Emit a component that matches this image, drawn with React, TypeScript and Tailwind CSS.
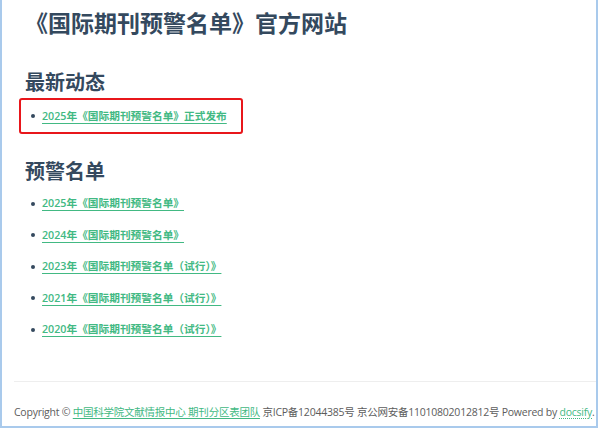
import React from "react";

const font = { fontFamily: '"Open Sans", "Noto Sans CJK SC", sans-serif' };

const warnings = [
  "2025年《国际期刊预警名单》",
  "2024年《国际期刊预警名单》",
  "2023年《国际期刊预警名单（试行）》",
  "2021年《国际期刊预警名单（试行）》",
  "2020年《国际期刊预警名单（试行）》",
];

function Dot() {
  return <span className="block w-[4px] h-[4px] rounded-full bg-[#34495e] shrink-0" />;
}

export default function App() {
  return (
    <div style={font} className="w-[598px] h-[428px] bg-white border-x-2 border-b-2 border-[#a9caec] flex flex-col text-[#34495e] overflow-hidden">
      <div className="pl-[17px]">
        <h1 className="pl-[6px] h-[46px] leading-[46px] text-[23px] font-bold">
          《国际期刊预警名单》官方网站
        </h1>
        <h2 className="pl-[6px] mt-[24px] h-[26px] leading-[26px] text-[20px] font-bold">最新动态</h2>
        <div className="mt-[2px] w-[224px] h-[36px] border-2 border-[#e8161b] rounded-[3px] flex items-center pl-[10px] gap-[7px]">
          <Dot />
          <a className="text-[10.7px] font-semibold text-[#42b983] underline underline-offset-[3px] decoration-1 leading-none">
            2025年《国际期刊预警名单》正式发布
          </a>
        </div>
        <h2 className="pl-[6px] mt-[25px] h-[26px] leading-[26px] text-[20px] font-bold">预警名单</h2>
        <ul className="mt-[3px] pl-[12px]">
          {warnings.map((w) => (
            <li key={w} className="h-[31.5px] flex items-center gap-[7px]">
              <Dot />
              <a className="text-[10.7px] font-semibold text-[#42b983] underline underline-offset-[3px] decoration-1 leading-none">
                {w}
              </a>
            </li>
          ))}
        </ul>
      </div>
      <div className="pl-[12px] mt-[35px]">
        <div className="h-px bg-[#eeeeee]" />
        <p className="mt-[20px] h-[20px] leading-[20px] text-[10.5px] text-[#5c5c5c] whitespace-nowrap tracking-[-0.24px]">
          Copyright ©{" "}
          <a className="text-[#42b983] underline underline-offset-2 decoration-1">中国科学院文献情报中心 期刊分区表团队</a>{" "}
          京ICP备12044385号 京公网安备11010802012812号 Powered by{" "}
          <a className="text-[#42b983] underline underline-offset-2 decoration-dotted decoration-1">docsify</a>.
        </p>
      </div>
    </div>
  );
}
